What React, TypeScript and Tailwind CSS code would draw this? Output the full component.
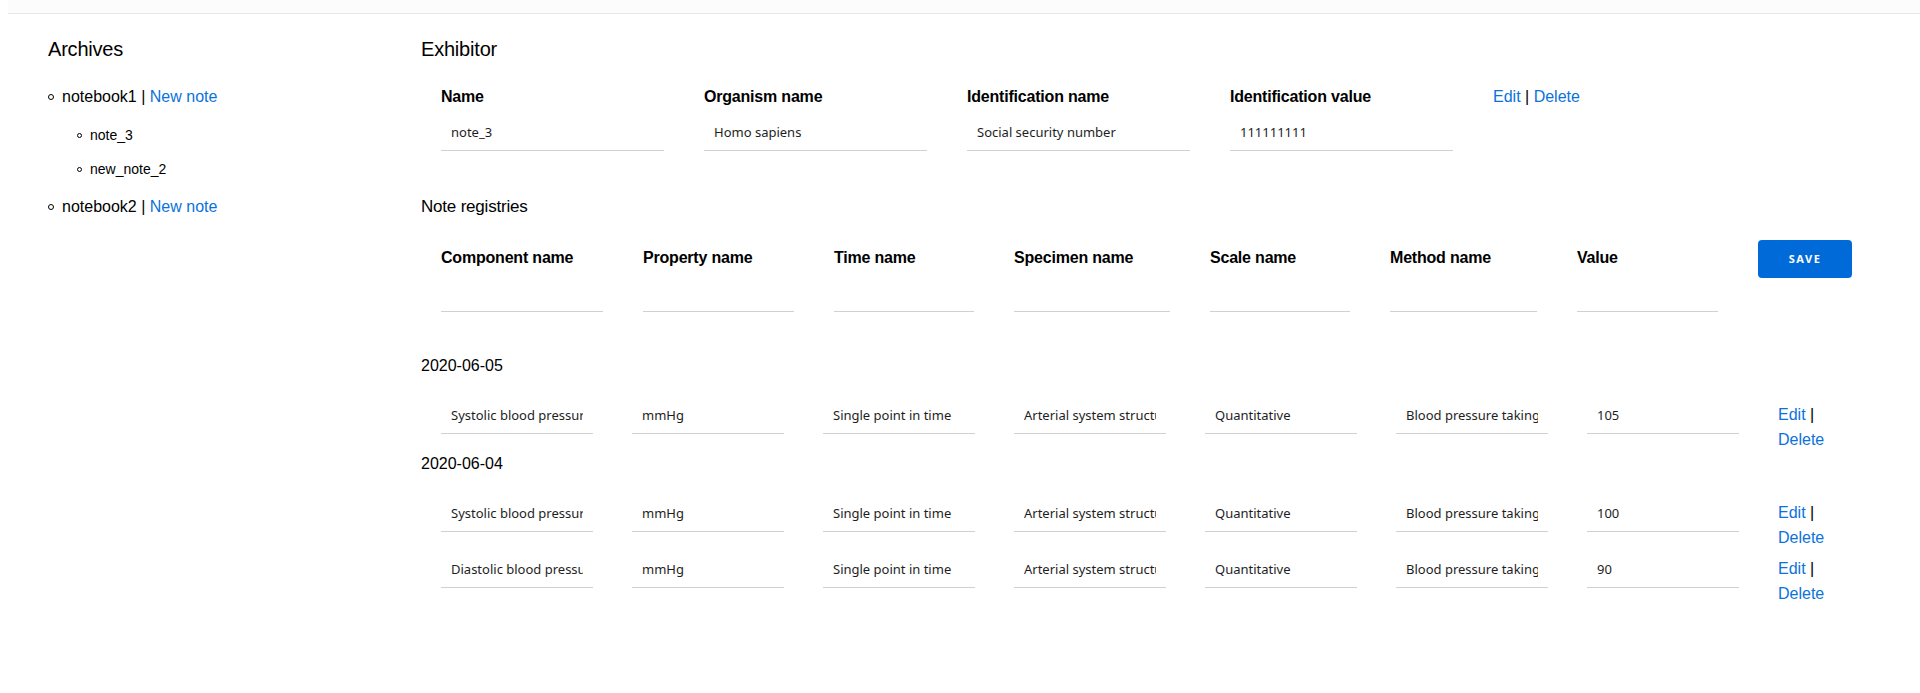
import React from "react";

const inputCls =
  "block h-[38px] border-0 border-b border-solid border-[#d1d1d1] bg-transparent px-[10px] text-[13px] text-[#1e1e1e] font-['Noto_Sans',sans-serif] outline-none";

function Field({ label, value, wCls }: { label: string; value: string; wCls: string }) {
  return (
    <div className={`flex shrink-0 flex-col ${wCls}`}>
      <div className="h-5 whitespace-nowrap text-base font-bold leading-5 tracking-[-0.2px] text-black">{label}</div>
      <input readOnly value={value} className={`mt-[6px] w-full ${inputCls}`} />
    </div>
  );
}

function Links() {
  return (
    <div className="mt-[6px] w-[60px] shrink-0 text-base leading-[25px] text-black">
      <div>
        <a className="cursor-pointer text-[#0b72dc]">Edit</a> |
      </div>
      <div>
        <a className="cursor-pointer text-[#0b72dc]">Delete</a>
      </div>
    </div>
  );
}

function DataRow({ vals }: { vals: string[] }) {
  return (
    <div className="ml-5 flex h-[56px] items-start gap-[39px]">
      {vals.map((v, i) => (
        <input key={i} readOnly value={v} className={`w-[152px] min-w-0 shrink-0 ${inputCls}`} />
      ))}
      <Links />
    </div>
  );
}

function Bullet({ small }: { small?: boolean }) {
  return small ? (
    <span className="mr-[8px] inline-block h-[5px] w-[5px] shrink-0 rounded-full border border-black" />
  ) : (
    <span className="mr-[8px] inline-block h-[6px] w-[6px] shrink-0 rounded-full border border-black" />
  );
}

export default function App() {
  const rowA = ["Systolic blood pressure", "mmHg", "Single point in time", "Arterial system structure", "Quantitative", "Blood pressure taking", "105"];
  const rowB = ["Systolic blood pressure", "mmHg", "Single point in time", "Arterial system structure", "Quantitative", "Blood pressure taking", "100"];
  const rowC = ["Diastolic blood pressure", "mmHg", "Single point in time", "Arterial system structure", "Quantitative", "Blood pressure taking", "90"];
  return (
    <div className="min-h-[693px] w-full overflow-hidden bg-white font-['Liberation_Sans',Arial,sans-serif] text-black">
      <div className="ml-[8px] h-[14px] border-b border-[#e6e6e6] bg-[#fcfcfc]" />
      <div className="flex">
        {/* Sidebar */}
        <div className="w-[421px] shrink-0 pl-[48px] pt-[23px]">
          <div className="h-6 text-[20px] leading-6 tracking-[-0.2px]">Archives</div>
          <div className="mt-6">
            <div className="flex h-6 items-center text-base leading-6">
              <Bullet />
              <span>
                notebook1 | <a className="cursor-pointer text-[#0b72dc]">New note</a>
              </span>
            </div>
            <div className="ml-[29px] mt-4 flex flex-col gap-[14px]">
              <div className="flex h-5 items-center text-sm leading-5">
                <Bullet small />
                <span>note_3</span>
              </div>
              <div className="flex h-5 items-center text-sm leading-5">
                <Bullet small />
                <span>new_note_2</span>
              </div>
            </div>
            <div className="mt-4 flex h-6 items-center text-base leading-6">
              <Bullet />
              <span>
                notebook2 | <a className="cursor-pointer text-[#0b72dc]">New note</a>
              </span>
            </div>
          </div>
        </div>

        {/* Main */}
        <div className="min-w-0 flex-1 pt-[23px]">
          <div className="h-6 text-[20px] leading-6 tracking-[-0.2px]">Exhibitor</div>
          <div className="ml-5 mt-[26px] flex items-start gap-[40px]">
            <Field label="Name" value="note_3" wCls="w-[223px]" />
            <Field label="Organism name" value="Homo sapiens" wCls="w-[223px]" />
            <Field label="Identification name" value="Social security number" wCls="w-[223px]" />
            <Field label="Identification value" value="111111111" wCls="w-[223px]" />
            <div className="h-5 whitespace-nowrap text-base leading-5">
              <a className="cursor-pointer text-[#0b72dc]">Edit</a> | <a className="cursor-pointer text-[#0b72dc]">Delete</a>
            </div>
          </div>

          <div className="mt-[44px] h-6 text-[17px] leading-6 tracking-[-0.2px]">Note registries</div>
          <div className="ml-5 mt-[21px] flex items-start gap-[40px]">
            <div className="mt-2 flex gap-[40px]">
              <Field label="Component name" value="" wCls="w-[162px]" />
              <Field label="Property name" value="" wCls="w-[151px]" />
              <Field label="Time name" value="" wCls="w-[140px]" />
              <Field label="Specimen name" value="" wCls="w-[156px]" />
              <Field label="Scale name" value="" wCls="w-[140px]" />
              <Field label="Method name" value="" wCls="w-[147px]" />
              <Field label="Value" value="" wCls="w-[141px]" />
            </div>
            <button className="h-[38px] w-[94px] shrink-0 rounded-[4px] bg-[#006ad8] font-['Noto_Sans',sans-serif] text-[11px] font-bold tracking-[0.14em] text-white">
              SAVE
            </button>
          </div>

          <div className="mt-[42px] h-6 text-base leading-6">2020-06-05</div>
          <div className="mt-[18px]">
            <DataRow vals={rowA} />
          </div>
          <div className="h-6 text-base leading-6">2020-06-04</div>
          <div className="mt-[18px]">
            <DataRow vals={rowB} />
            <DataRow vals={rowC} />
          </div>
        </div>
      </div>
    </div>
  );
}
